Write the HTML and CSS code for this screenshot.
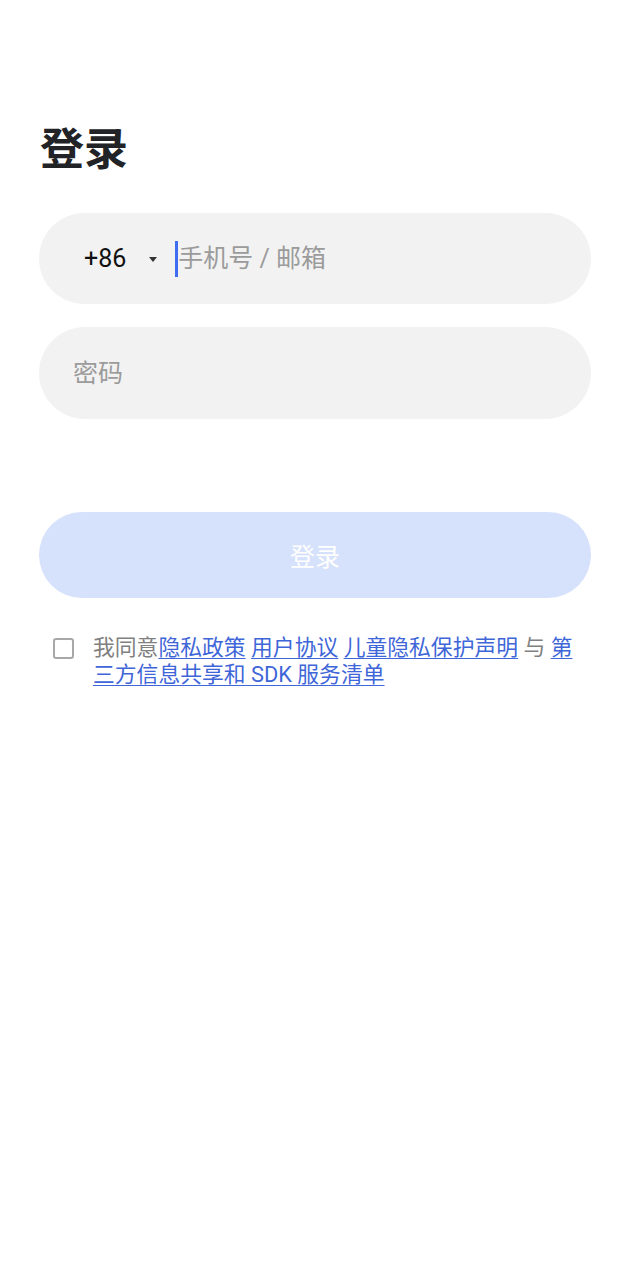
FILE: index.html
```html
<!DOCTYPE html>
<html lang="zh-CN">
<head>
<meta charset="utf-8">
<link rel="stylesheet" href="styles.css">
</head>
<body>
<main class="page">
  <h1 class="title">登录</h1>
  <div class="field field-phone">
    <span class="code">+86</span>
    <svg class="caret-down" width="8" height="5" viewBox="0 0 8 5"><path d="M0 0H8L4 5Z" fill="#333"/></svg>
    <span class="cursor"></span>
    <span class="placeholder">手机号 / 邮箱</span>
  </div>
  <div class="field field-pass">
    <span class="placeholder">密码</span>
  </div>
  <button class="submit" type="button">登录</button>
  <div class="agree">
    <span class="check"></span>
    <p class="agree-text">我同意<a href="#">隐私政策</a> <a href="#">用户协议</a> <a href="#">儿童隐私保护声明</a> 与 <a href="#">第三方信息共享和 SDK 服务清单</a></p>
  </div>
</main>
</body>
</html>
```
FILE: styles.css
```css
html, body {
  margin: 0;
  padding: 0;
  background: #fff;
}
body {
  font-family: Roboto, "Noto Sans CJK SC", sans-serif;
  color: #222;
}
.page {
  padding: 118px 39px 0 39px;
  display: flex;
  flex-direction: column;
}
.title {
  margin: 0 0 0 1px;
  font-family: "Noto Sans CJK SC", sans-serif;
  font-size: 44px;
  font-weight: 700;
  line-height: 56px;
  color: #222326;
}
.field {
  background: #f2f2f2;
  border-radius: 46px;
  display: flex;
  align-items: center;
}
.field-phone {
  margin-top: 39px;
  height: 91px;
  padding-left: 45px;
}
.field-pass {
  margin-top: 23px;
  height: 92px;
  padding-left: 34px;
}
.code {
  font-size: 25px;
  color: #111;
  line-height: 1;
}
.caret-down {
  margin-left: 23px;
  margin-top: 2px;
}
.cursor {
  width: 3px;
  height: 36px;
  background: #3f6cf0;
  margin-left: 18px;
}
.placeholder {
  font-family: Roboto, "Noto Sans CJK SC", sans-serif;
  font-size: 25px;
  color: #9b9b9b;
  line-height: 1;
}
.submit {
  margin-top: 93px;
  height: 86px;
  border: none;
  border-radius: 43px;
  background: #d6e1fb;
  color: #fff;
  font-family: "Noto Sans CJK SC", sans-serif;
  font-size: 25px;
  padding: 0;
}
.agree {
  margin-top: 36px;
  display: flex;
  align-items: flex-start;
  padding-left: 14px;
  padding-right: 14px;
}
.check {
  flex: none;
  width: 17px;
  height: 17px;
  border: 2px solid #a8a8a8;
  border-radius: 3px;
  margin-top: 3.5px;
}
.agree-text {
  margin: 0 0 0 19px;
  font-family: Roboto, "Noto Sans CJK SC", sans-serif;
  font-size: 21.8px;
  line-height: 27px;
  color: #808080;
}
.agree-text a {
  color: #3f66d8;
  text-decoration: underline;
  text-underline-offset: 3px;
  text-decoration-thickness: 1px;
}
```
